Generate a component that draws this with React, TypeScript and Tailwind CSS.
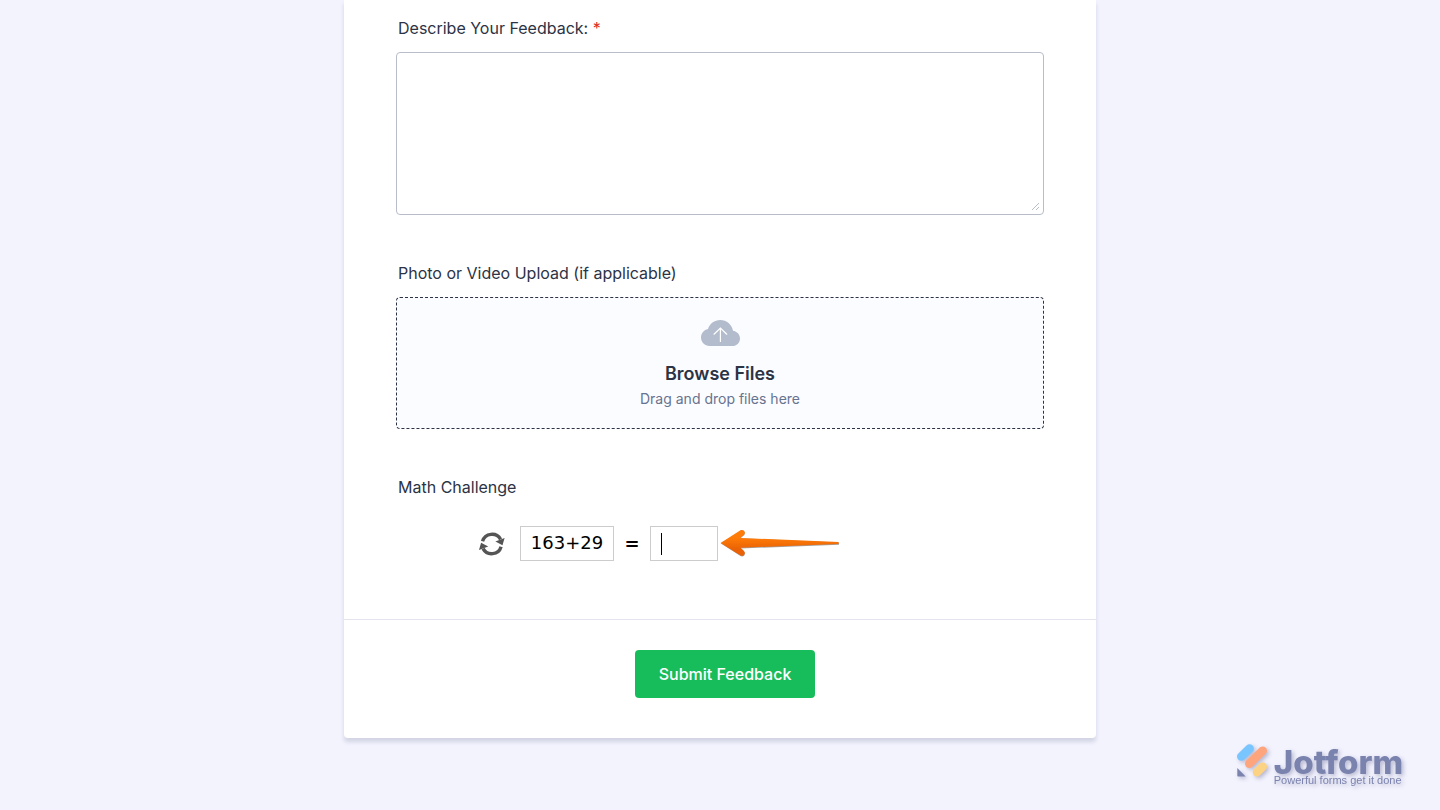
import React from "react";

function CloudUploadIcon() {
  return (
    <svg width="39" height="26" viewBox="0 0 39 26" aria-hidden="true">
      <path
        d="M8.5 26C3.8 26 0 22.200 0 17.500C0 13.200 3 9.800 7 9C8.6 3.800 13.400 0 19.200 0C25.600 0 31 4.600 32 10.800C36 11.400 39 14.600 39 18.400C39 22.600 35.600 26 31.400 26Z"
        fill="#b3bccc"
      />
      <path
        d="M19.400 21.500V8M13 14.200L19.400 8L25.800 14.200"
        fill="none"
        stroke="#ffffff"
        strokeWidth="1.200"
        strokeLinecap="round"
      />
    </svg>
  );
}

function RefreshIcon() {
  return (
    <svg width="26" height="24" viewBox="0 0 26 24" aria-hidden="true">
      <g fill="none" stroke="#555555" strokeWidth="3.400">
        <path d="M3.500 9.300A9.900 9.900 0 0 1 21.600 7.300" />
        <path d="M22.100 14.700A9.900 9.900 0 0 1 4 16.700" />
      </g>
      <path d="M25.600 6L23.500 13.200L16.400 9.600Z" fill="#555555" />
      <path d="M0 18L2.100 10.800L9.200 14.400Z" fill="#555555" />
    </svg>
  );
}

function PointerArrow() {
  return (
    <svg width="120" height="28" viewBox="0 0 120 28" aria-hidden="true">
      <defs>
        <linearGradient id="arrow-fill" x1="0" y1="0" x2="0" y2="1">
          <stop offset="0.3" stopColor="#ff7c08" />
          <stop offset="0.75" stopColor="#ea6205" />
        </linearGradient>
      </defs>
      <path
        d="M1 14.500L20.500 1.700C22.800 0.500 25.500 2.400 24.800 5C24.500 6.400 21.500 8 20.600 9.300L119 13.500V15.700L20.600 19.500C21.500 20.800 24.500 22.600 24.800 24C25.400 26.500 22.800 28.200 20.500 27Z"
        fill="#777777"
        opacity="0.7"
      />
      <path
        d="M0.500 14L20.500 1.200C22.800 0.100 25.300 2.200 24.700 4.500C24.300 6 21.500 7.600 20.500 8.900L118.500 13V14.900L20.500 18.800C21.500 20.100 24.300 21.600 24.700 23.200C25.300 25.500 22.800 27.600 20.500 26.500Z"
        fill="url(#arrow-fill)"
      />
    </svg>
  );
}

function BrandLogo() {
  return (
    <a
      href="#"
      aria-label="Jotform"
      className="fixed right-[37px] bottom-6 flex text-[#7a82ae] drop-shadow-[2px_2px_2px_rgba(90,95,140,0.4)]"
    >
      <svg width="32" height="35" viewBox="0 0 32 35" aria-hidden="true">
        <g fill="none" strokeLinecap="round" strokeWidth="8.600">
          <path d="M5.300 13.500L13.500 5.600" stroke="#78c5ff" />
          <path d="M13.300 20.700L26.700 7.700" stroke="#ffa57e" />
          <path d="M21 29.200L26.700 23.700" stroke="#fcd284" />
        </g>
        <path d="M1.300 25L9.700 33.500H2.100C1.600 33.500 1.300 33.200 1.300 32.700Z" fill="#7a82ae" />
      </svg>
      <span className="ml-1.5 flex flex-col">
        <span className="h-[31px] font-['Inter',sans-serif] text-[33px] leading-[38px] font-extrabold">
          Jotform
        </span>
        <span className="font-['Liberation_Sans',sans-serif] text-[11px] leading-3">
          Powerful forms get it done
        </span>
      </span>
    </a>
  );
}

export default function App() {
  return (
    <div className="min-h-screen bg-[#f3f3fe] px-4 pb-[72px] font-['Inter',sans-serif] text-base leading-5 text-[#2c3345]">
      <form
        onSubmit={(e) => e.preventDefault()}
        className="mx-auto max-w-[752px] rounded-b bg-white shadow-[0_4px_4px_rgba(87,100,126,0.21)]"
      >
        <div className="flex flex-col gap-12 px-[52px] pt-[18px] pb-[58px]">
          <div>
            <label htmlFor="feedback" className="mb-3.5 block pl-0.5">
              Describe Your Feedback: <span className="text-[#e02b20]">*</span>
            </label>
            <div className="relative">
              <textarea
                id="feedback"
                required
                className="block h-[163px] w-full resize-none rounded border border-[#b8bdc9] bg-white p-2.5 outline-none"
              />
              <svg
                className="pointer-events-none absolute right-1 bottom-1"
                width="9"
                height="9"
                viewBox="0 0 9 9"
                aria-hidden="true"
              >
                <path d="M1 8L8 1M5 8L8 5" stroke="#b8bdc9" fill="none" />
              </svg>
            </div>
          </div>

          <div>
            <label htmlFor="upload" className="mb-3.5 block pl-0.5">
              Photo or Video Upload (if applicable)
            </label>
            <input id="upload" type="file" multiple className="sr-only" />
            <label
              htmlFor="upload"
              className="flex h-[132px] cursor-pointer flex-col items-center rounded border border-dashed border-[#2c3345] bg-[#fbfcff] pt-[22px]"
            >
              <CloudUploadIcon />
              <span className="mt-4 text-lg leading-6 font-semibold">Browse Files</span>
              <span className="mt-[3px] text-sm leading-5 text-[#67738f]">
                Drag and drop files here
              </span>
            </label>
          </div>

          <div>
            <label htmlFor="answer" className="block pl-0.5">
              Math Challenge
            </label>
            <div className="mt-[29px] flex items-center pl-[83px] font-['DejaVu_Sans',sans-serif] text-lg text-black">
              <button type="button" aria-label="New question">
                <RefreshIcon />
              </button>
              <span className="ml-[15px] flex h-[35px] w-[94px] items-center justify-center border border-[#cccccc] pb-0.5">
                163+29
              </span>
              <span className="w-9 text-center font-bold">=</span>
              <span className="relative flex">
                <input
                  id="answer"
                  type="text"
                  inputMode="numeric"
                  className="h-[35px] w-[68px] border border-[#cccccc] px-2.5 caret-transparent outline-none"
                />
                <span className="absolute top-[7px] left-[11px] h-[22px] w-px bg-black" />
              </span>
              <span className="ml-0.5 pb-0.5">
                <PointerArrow />
              </span>
            </div>
          </div>
        </div>

        <div className="flex justify-center border-t border-[#e3e4ee] pt-[30px] pb-10 pl-2.5">
          <button
            type="submit"
            className="h-12 w-[180px] rounded bg-[#18bd5b] font-medium text-white"
          >
            Submit Feedback
          </button>
        </div>
      </form>
      <BrandLogo />
    </div>
  );
}
